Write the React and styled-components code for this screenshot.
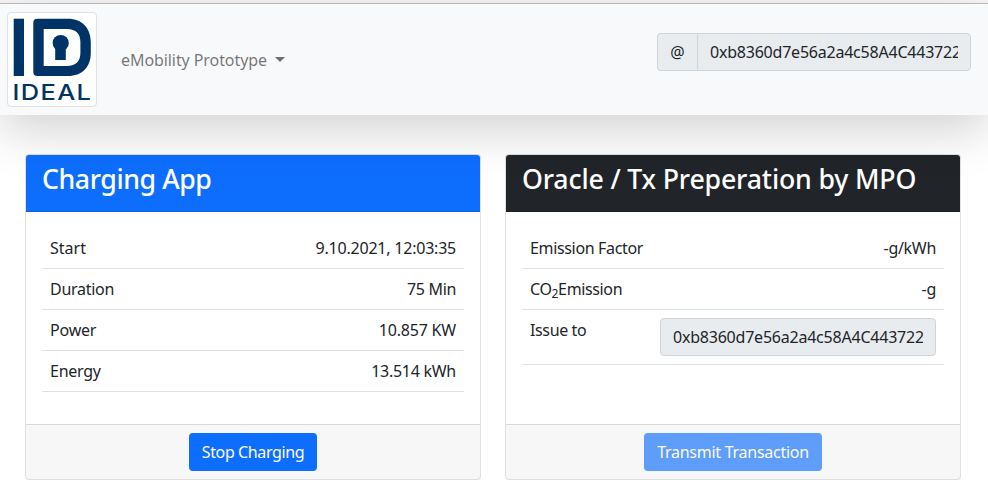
import React from "react";
import styled, { createGlobalStyle } from "styled-components";

const GlobalStyle = createGlobalStyle`
  *, *::before, *::after { box-sizing: border-box; }
  html, body { margin: 0; padding: 0; }
  body {
    height: 498px;
    overflow: hidden;
    background: #fff;
    color: #212529;
    font: 400 16px/24px "Noto Sans", "Open Sans", sans-serif;
  }
`;

const TopEdge = styled.div`
  height: 4px;
  background: #f6f5f4;
  border-bottom: 1px solid #bdbdbd;
`;

const Navbar = styled.nav`
  position: relative;
  z-index: 1;
  display: flex;
  align-items: flex-start;
  height: 111px;
  padding: 8px 17px 8px 7px;
  background: #f8f9fa;
  box-shadow: 0 16px 48px rgba(0, 0, 0, 0.175);
`;

const Brand = styled.a`
  display: flex;
  width: 90px;
  height: 95px;
  padding: 4px;
  background: #fff;
  border: 1px solid #dee2e6;
  border-radius: 4px;
`;

const LogoMark = styled.svg`
  flex: none;
  overflow: visible;
`;

const NavToggle = styled.a`
  display: flex;
  align-items: center;
  margin: 36px auto 0 24px;
  color: rgba(0, 0, 0, 0.55);
`;

const Caret = styled.span`
  margin: -2px 0 0 8px;
  border-top: 5px solid currentColor;
  border-left: 5px solid transparent;
  border-right: 5px solid transparent;
`;

const Label = styled.span`
  letter-spacing: ${(p) => p.$track || 0}px;
  white-space: nowrap;
`;

const InputGroup = styled.div`
  display: flex;
  width: 314px;
  height: 38px;
  margin-top: 21px;
`;

const Addon = styled.span`
  width: 41px;
  padding: 6px 0;
  text-align: center;
  background: #e9ecef;
  border: 1px solid #ced4da;
  border-right: 0;
  border-radius: 4px 0 0 4px;
`;

const Field = styled.input`
  flex: none;
  width: ${(p) => p.$width}px;
  height: 38px;
  padding: 6px 12px;
  font: inherit;
  letter-spacing: -0.22px;
  color: #212529;
  background: #e9ecef;
  border: 1px solid #ced4da;
  border-radius: ${(p) => (p.$joined ? "0 4px 4px 0" : "4px")};
  outline: none;
`;

const Cards = styled.main`
  display: grid;
  grid-template-columns: 456px 456px;
  column-gap: 24px;
  padding: 39px 25px 0;
`;

const Card = styled.section`
  display: flex;
  flex-direction: column;
  height: 326px;
  background: #fff;
  border: 1px solid rgba(0, 0, 0, 0.125);
  border-radius: 4px;
`;

const CardHeader = styled.header`
  height: 57px;
  padding: 7px 16px;
  color: #fff;
  background: ${(p) => p.$color};
  border-bottom: 1px solid rgba(0, 0, 0, 0.125);
  border-radius: 3px 3px 0 0;
`;

const Title = styled.h3`
  margin: 0;
  font-size: 26.7px;
  font-weight: 500;
  line-height: 34px;
  letter-spacing: ${(p) => p.$track || 0}px;
  white-space: nowrap;
`;

const CardBody = styled.div`
  flex: 1;
  padding: 16px;
`;

const Row = styled.div`
  display: flex;
  justify-content: space-between;
  padding: 8px;
  border-bottom: 1px solid #dee2e6;
`;

const Sub = styled.sub`
  position: relative;
  bottom: -3px;
  font-size: 12px;
  line-height: 0;
  vertical-align: baseline;
`;

const CardFooter = styled.footer`
  display: flex;
  justify-content: center;
  height: 55px;
  padding: 8px 16px;
  background: rgba(0, 0, 0, 0.03);
  border-top: 1px solid rgba(0, 0, 0, 0.125);
`;

const Button = styled.button`
  width: ${(p) => p.$width}px;
  height: 38px;
  padding: 0;
  font: inherit;
  letter-spacing: ${(p) => p.$track || 0}px;
  white-space: nowrap;
  color: #fff;
  background: #0d6efd;
  border: 0;
  border-radius: 4px;
  opacity: ${(p) => (p.disabled ? 0.65 : 1)};
`;

const ADDRESS = "0xb8360d7e56a2a4c58A4C4437229cF5b0";

const session = [
  { name: "Start", value: "9.10.2021, 12:03:35", nameTrack: 0, valueTrack: -0.22 },
  { name: "Duration", value: "75 Min", nameTrack: -0.27, valueTrack: -0.33 },
  { name: "Power", value: "10.857 KW", nameTrack: -0.2, valueTrack: -0.2 },
  { name: "Energy", value: "13.514 kWh", nameTrack: -0.25, valueTrack: -0.27 },
];

function Logo() {
  return (
    <LogoMark width="80" height="85" viewBox="12 17 80 85" fill="#003366">
      <rect x="13.7" y="18.7" width="10.3" height="57.3" />
      <path
        fillRule="evenodd"
        d="M37.3 18.7H68C82 18.7 90.8 28 90.8 42V53C90.8 67 82 76 68 76H37.3Q33.3 76 33.3 72V22.7Q33.3 18.7 37.3 18.7ZM43.7 29V66H67C76 66 80.4 61 80.4 53V42C80.4 34 76 29 67 29Z"
      />
      <circle cx="60.7" cy="43" r="8.1" />
      <rect x="55.2" y="47" width="10.6" height="13" />
      <text
        x="12.4"
        y="100.3"
        fontFamily="Inter, sans-serif"
        fontSize="21.3"
        fontWeight="500"
        letterSpacing="1.2"
        textLength="80"
        lengthAdjust="spacingAndGlyphs"
      >
        IDEAL
      </text>
    </LogoMark>
  );
}

export default function App() {
  return (
    <>
      <GlobalStyle />
      <TopEdge />
      <Navbar>
        <Brand>
          <Logo />
        </Brand>
        <NavToggle>
          <Label $track={-0.08}>eMobility Prototype</Label>
          <Caret />
        </NavToggle>
        <InputGroup>
          <Addon>@</Addon>
          <Field $width={274} $joined readOnly value={ADDRESS} />
        </InputGroup>
      </Navbar>
      <Cards>
        <Card>
          <CardHeader $color="#0d6efd">
            <Title $track={-0.42}>Charging App</Title>
          </CardHeader>
          <CardBody>
            {session.map((row) => (
              <Row key={row.name}>
                <Label $track={row.nameTrack}>{row.name}</Label>
                <Label $track={row.valueTrack}>{row.value}</Label>
              </Row>
            ))}
          </CardBody>
          <CardFooter>
            <Button $width={128} $track={-0.38}>
              Stop Charging
            </Button>
          </CardFooter>
        </Card>
        <Card>
          <CardHeader $color="#212529">
            <Title $track={-0.16}>Oracle / Tx Preperation by MPO</Title>
          </CardHeader>
          <CardBody>
            <Row>
              <Label $track={-0.34}>Emission Factor</Label>
              <Label $track={-0.3}>-g/kWh</Label>
            </Row>
            <Row>
              <Label $track={-0.36}>
                CO<Sub>2</Sub>Emission
              </Label>
              <Label $track={-0.3}>-g</Label>
            </Row>
            <Row>
              <Label $track={-0.37}>Issue to</Label>
              <Field $width={276} readOnly value={ADDRESS} />
            </Row>
          </CardBody>
          <CardFooter>
            <Button $width={178} $track={-0.27} disabled>
              Transmit Transaction
            </Button>
          </CardFooter>
        </Card>
      </Cards>
    </>
  );
}
